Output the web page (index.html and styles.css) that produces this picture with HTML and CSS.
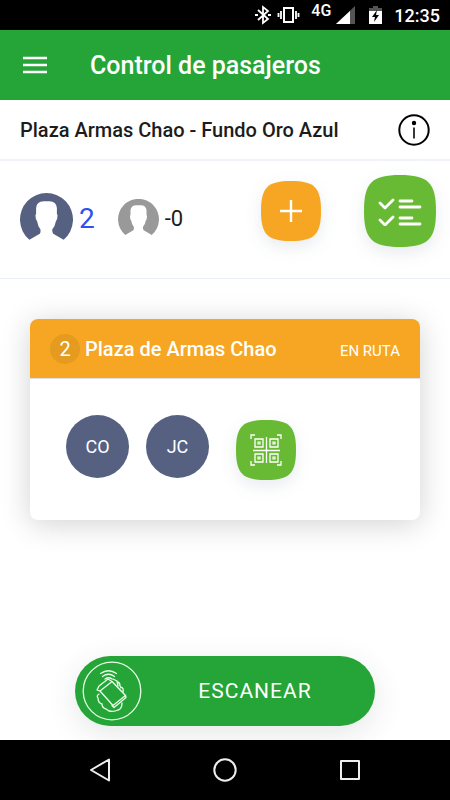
FILE: index.html
```html
<!DOCTYPE html>
<html lang="es">
<head>
<meta charset="utf-8">
<meta name="viewport" content="width=device-width, initial-scale=1">
<title>Control de pasajeros</title>
<link rel="stylesheet" href="styles.css">
</head>
<body>
<svg class="defs" width="0" height="0" aria-hidden="true">
  <symbol id="squircle" viewBox="0 0 60 60"><path d="M0 30C0 6.500 6.500 0 30 0S60 6.500 60 30 53.500 60 30 60 0 53.500 0 30z"/></symbol>
  <symbol id="person" viewBox="0 0 158 139"><path d="M28 139A79 79 0 1 1 130 139L99 121Q96 118 96 108Q105 98 107 84Q112 78 112 66L110 62V44Q108 24 88 24H70Q50 24 48 44V62L46 66Q46 78 51 84Q53 98 61 108Q62 118 59 121z"/></symbol>
</svg>
<div class="status">
  <svg width="46" height="20" viewBox="0 0 46 20" fill="none" stroke="#fff" aria-hidden="true">
    <path d="M3 5l10 9-5 4V2l5 4-10 9" stroke-width="1.800"/><path d="M0 10h3M13 10h3" stroke-width="2"/>
    <path d="M29 3h9v14h-9z" stroke-width="2"/><path d="M26 6v8M41 6v8" stroke-width="1.800"/><path d="M23.500 8v4M43.500 8v4" stroke-width="1.800"/>
  </svg>
  <span class="network">4G</span>
  <svg class="signal" width="19" height="20" viewBox="0 0 19 20" aria-hidden="true"><path d="M19 1v18H0z" fill="#555"/><path d="M14 6v13H0z" fill="#fff"/></svg>
  <svg class="battery" width="13" height="20" viewBox="0 0 13 20" aria-hidden="true"><path d="M4 1h5v2h4v4H0V3h4z" fill="#555"/><path d="M0 6h13v13H0z" fill="#fff"/><path d="M8 5L3 12h3l-1 5 5-7H7z"/></svg>
  <span class="clock">12:35</span>
</div>
<header class="appbar">
  <button class="plain" aria-label="Menú"><svg width="24" height="18" viewBox="0 0 24 18" stroke="#fff" stroke-width="2.400"><path d="M0 2h24M0 9h24M0 16h24"/></svg></button>
  <h1>Control de pasajeros</h1>
</header>
<main>
  <section class="route">
    <h2>Plaza Armas Chao - Fundo Oro Azul</h2>
    <button class="plain" aria-label="Información"><svg width="32" height="32" viewBox="0 0 32 32"><circle cx="16" cy="16" r="14.700" fill="none" stroke="#000" stroke-width="2"/><circle cx="16" cy="9" r="2.200"/><path d="M16 13.500v11" stroke="#222" stroke-width="1.800"/></svg></button>
  </section>
  <section class="summary">
    <div class="count onboard"><svg width="53" height="47"><use href="#person"/></svg><span>2</span></div>
    <div class="count pending"><svg width="41" height="36"><use href="#person"/></svg><span>-0</span></div>
    <button class="tile add" aria-label="Agregar"><svg class="shape"><use href="#squircle"/></svg><svg class="glyph" width="22" height="22" viewBox="0 0 22 22" stroke="#fff" stroke-width="2.400"><path d="M11 0v22M0 11h22"/></svg></button>
    <button class="tile list" aria-label="Lista"><svg class="shape"><use href="#squircle"/></svg><svg class="glyph" width="44" height="30" viewBox="0 0 44 30" fill="none" stroke="#fff" stroke-width="2.800" stroke-linecap="round" stroke-linejoin="round"><path d="M2 7l5 5 8-8M2 24l5 5 8-8M22 5h12M22 11h20M22 22h12M22 28h20"/></svg></button>
  </section>
  <article class="stop">
    <header class="stop-head"><span class="badge">2</span><h3>Plaza de Armas Chao</h3><span class="state">EN RUTA</span></header>
    <div class="stop-body">
      <span class="avatar">CO</span><span class="avatar">JC</span>
      <button class="tile qr" aria-label="Código QR"><svg class="shape"><use href="#squircle"/></svg><svg class="glyph" width="32" height="32" viewBox="0 0 32 32" fill="none" stroke="#fff"><path d="M1 5V1h4M27 1h4v4M31 27v4h-4M5 31H1v-4M16.500 3v26M3 16.500h27" stroke-width="1.300"/><path d="M5 5h8v8H5zM20 5h8v8h-8zM5 20h8v8H5zM20 20h8v8h-8z" stroke-width="1.300"/><path d="M8 8h2v2H8zM23 8h2v2h-2zM8 23h2v2H8zM23 23h2v2h-2z" stroke-width="1.200"/></svg></button>
    </div>
  </article>
  <button class="scan">
    <svg width="60" height="60" viewBox="0 0 60 60" fill="none" stroke="#e8ffe8" stroke-width="1.300" stroke-linejoin="round" stroke-linecap="round" aria-hidden="true"><circle cx="30" cy="30" r="28.800"/>
      <path d="M18.500 12.500Q26.500 7 34.500 12.500M20.500 15.500Q26.500 11 32.500 15.500M23 18Q26.500 15.500 30 18"/>
      <path d="M18 30L30 20.500 43.500 34.500 31 44.500z"/><path d="M18 30l-3-1 2-4 9-7 4 2.500M43.500 34.500l.500 2-12 10-2-2"/>
      <path d="M31 18l4 2 1 5M35 21q3 0 3 4l1 2M39 26q3 1 2 5"/>
      <path d="M17 33q-3 2-1 4 0 5 4 6 0 4 4 5l3 2q5 1 9-1 4-1 4-7"/></svg>
    <span>ESCANEAR</span>
  </button>
</main>
<nav class="system" aria-label="Sistema">
  <button class="plain" aria-label="Atrás"><svg width="24" height="24" viewBox="0 0 24 24"><path d="M21 1.500v21L3 12z"/></svg></button>
  <button class="plain" aria-label="Inicio"><svg width="24" height="24" viewBox="0 0 24 24"><circle cx="12" cy="12" r="10.700"/></svg></button>
  <button class="plain" aria-label="Recientes"><svg width="24" height="24" viewBox="0 0 24 24"><path d="M3 3h18v18H3z"/></svg></button>
</nav>
</body>
</html>
```
FILE: styles.css
```css
* { box-sizing: border-box; }
body {
  margin: 0;
  min-height: 100vh;
  display: flex;
  flex-direction: column;
  font-family: Roboto, "Liberation Sans", sans-serif;
  background: #fff;
  color: #1c1c1c;
}
svg { display: block; flex: none; }
.defs { position: absolute; }
h1, h2, h3 { margin: 0; font-weight: 500; white-space: nowrap; }
button { font: inherit; border: 0; padding: 0; background: none; color: inherit; }

.status {
  height: 30px;
  padding: 0 10px;
  display: flex;
  align-items: center;
  justify-content: flex-end;
  background: #000;
  color: #fff;
  font-weight: 500;
}
.network { margin: 0 5px 8px 10px; font-size: 16px; line-height: 20px; }
.battery { margin: 0 12px 0 14px; }
.clock { font-size: 18px; }

.appbar {
  height: 70px;
  padding: 0 23px;
  display: flex;
  align-items: center;
  gap: 43px;
  background: #25a537;
  color: #fff;
}
h1 { font-size: 25px; }

main { flex: 1; display: flex; flex-direction: column; }
.route {
  height: 61px;
  padding: 0 20px;
  display: flex;
  align-items: center;
  justify-content: space-between;
  border-bottom: 2px solid #eff2f9;
}
h2 { font-size: 20px; }

.summary {
  height: 118px;
  padding: 0 14px 18px 20px;
  display: flex;
  align-items: center;
  border-bottom: 1px solid #e9edf6;
}
.count { display: flex; align-items: center; gap: 6px; }
.count span { padding-top: 4px; }
.onboard { margin-top: 12px; color: #2f50f0; font-size: 28px; }
.onboard svg { fill: #566182; }
.pending { margin: 12px auto 0 23px; font-size: 22px; }
.pending svg { fill: #999; }

.tile {
  position: relative;
  width: 60px;
  height: 60px;
  display: flex;
  align-items: center;
  justify-content: center;
  flex: none;
  fill: #68b933;
}
.shape {
  position: absolute;
  inset: 0;
  width: 100%;
  height: 100%;
  overflow: visible;
  filter: drop-shadow(0 6px 8px rgba(40, 60, 100, 0.1));
}
.glyph { position: relative; }
.add { margin-right: 43px; fill: #f6a623; }
.list { width: 72px; height: 72px; }

.stop {
  margin: 40px 30px 0;
  border-radius: 8px;
  box-shadow: 0 4px 30px rgba(0, 0, 0, 0.18);
  background: #fff;
}
.stop-head {
  height: 60px;
  padding: 0 20px;
  display: flex;
  align-items: center;
  border-radius: 8px 8px 0 0;
  border-bottom: 1px solid #e0e0e0;
  background: #f6a623;
  background-clip: padding-box;
  color: #fff;
}
.badge {
  width: 30px;
  height: 30px;
  margin-right: 5px;
  border-radius: 50%;
  background: #e49b20;
  font-size: 20px;
  line-height: 30px;
  text-align: center;
}
h3 { font-size: 20px; }
.state { margin-left: auto; padding-top: 4px; font-size: 15px; }
.stop-body { padding: 36px 36px 40px; display: flex; gap: 17px; }
.avatar {
  width: 63px;
  height: 63px;
  border-radius: 50%;
  background: #566182;
  color: #fff;
  font-size: 18px;
  line-height: 63px;
  text-align: center;
}
.qr { margin: 5px 0 0 10px; }

.scan {
  width: 300px;
  max-width: 90%;
  height: 70px;
  margin: auto auto 14px;
  padding: 0 7px;
  display: flex;
  align-items: center;
  border-radius: 35px;
  background: #25a537;
  box-shadow: 0 8px 30px rgba(40, 60, 50, 0.12);
  color: #fff;
  font-size: 21px;
  letter-spacing: 1px;
}
.scan span { flex: 1; }

.system {
  height: 60px;
  padding: 0 38px;
  display: flex;
  justify-content: space-around;
  align-items: center;
  background: #000;
}
.system svg { fill: none; stroke: #eee; stroke-width: 2; stroke-linejoin: round; }
```
